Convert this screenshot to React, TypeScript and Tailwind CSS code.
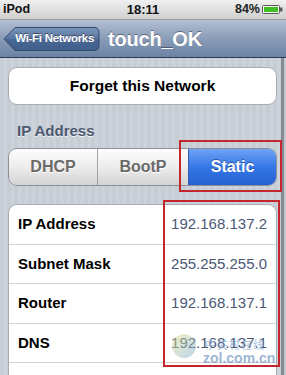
import React from "react";

const font = { fontFamily: '"Liberation Sans", Arial, "Noto Sans CJK SC", sans-serif' };

function Battery() {
  return (
    <svg width="21" height="9" viewBox="0 0 21 9">
      <rect x="0.5" y="0.5" width="17" height="8" rx="1" fill="#f4f4f4" stroke="#5a5a5a" />
      <rect x="2" y="2" width="14" height="5" fill="#3fbf24" />
      <rect x="18" y="2.5" width="2.5" height="4" fill="#5a5a5a" />
    </svg>
  );
}

function BackButton() {
  return (
    <div className="relative w-[97px] h-[26px] flex items-center justify-end pr-[6px]">
      <svg className="absolute inset-0" width="97" height="26" viewBox="0 0 97 26">
        <defs>
          <linearGradient id="bb" x1="0" y1="0" x2="0" y2="1">
            <stop offset="0" stopColor="#7d97bb" />
            <stop offset="0.5" stopColor="#56739e" />
            <stop offset="0.51" stopColor="#4a6893" />
            <stop offset="1" stopColor="#3f5e8c" />
          </linearGradient>
        </defs>
        <path
          d="M1 13 L12 1.5 H91 Q96 1.5 96 6.5 V19.5 Q96 24.5 91 24.5 H12 Z"
          fill="url(#bb)"
          stroke="#34496d"
          strokeWidth="1"
        />
      </svg>
      <span className="relative text-white font-bold text-[11.5px] tracking-[-0.3px] [text-shadow:0_-1px_0_rgba(0,0,0,0.45)]">
        Wi-Fi Networks
      </span>
    </div>
  );
}

function Row({ label, value, last }: { label: string; value: string; last?: boolean }) {
  return (
    <div
      className={
        "h-[39.5px] flex items-center justify-between pl-[9px] pr-[9px] " +
        (last ? "" : "border-b border-[#d2d2d2]")
      }
    >
      <span className="font-bold text-[15px] text-black">{label}</span>
      <span className="text-[15px] text-[#4a5874]">{value}</span>
    </div>
  );
}

export default function App() {
  return (
    <div className="relative w-[286px] h-[375px] overflow-hidden flex flex-col bg-[#c5ccd4]" style={font}>
      {/* Status bar */}
      <div className="h-[20px] shrink-0 flex items-center justify-between px-[3px] bg-gradient-to-b from-[#f0f0f0] to-[#cfcfcf] border-b border-[#9a9a9a]">
        <span className="font-bold text-[12.5px] text-[#111] w-[60px]">iPod</span>
        <span className="font-bold text-[13px] text-[#111]">18:11</span>
        <div className="w-[60px] flex items-center justify-end gap-[2px]">
          <span className="font-bold text-[12.5px] text-[#222]">84%</span>
          <Battery />
        </div>
      </div>

      {/* Nav bar */}
      <div className="h-[38px] shrink-0 flex items-center gap-[8px] pl-[3px] bg-gradient-to-b from-[#b3c0d2] via-[#8a9cb7] to-[#6b83a4] border-b border-[#2f3d52]">
        <BackButton />
        <span className="text-white font-bold text-[20px] tracking-[-0.2px] [text-shadow:0_-1px_0_rgba(0,0,0,0.4)]">
          touch_OK
        </span>
      </div>

      {/* Body */}
      <div className="flex-1 flex min-h-0">
        <div className="flex-1 flex flex-col pl-[8px] pr-[4px] pt-[9px] bg-[repeating-linear-gradient(90deg,#c6cdd5_0px,#c6cdd5_4px,#ccd3da_4px,#ccd3da_7px)]">
          <div className="h-[38px] shrink-0 rounded-[9px] bg-white border border-[#a9adb3] flex items-center justify-center">
            <span className="font-bold text-[15.5px] text-black">Forget this Network</span>
          </div>

          <div className="mt-[18px] pl-[9px] h-[16px] flex items-center">
            <span className="font-bold text-[15px] text-[#4d5870] [text-shadow:0_1px_0_rgba(255,255,255,0.8)]">
              IP Address
            </span>
          </div>

          <div className="mt-[9px] h-[38px] shrink-0 flex rounded-[9px] border border-[#8d9096] overflow-hidden">
            <div className="w-[89px] flex items-center justify-center bg-gradient-to-b from-[#fdfdfd] via-[#ededed] to-[#d3d3d3] border-r border-[#a3a3a3]">
              <span className="font-bold text-[16px] text-[#6a6a6a] [text-shadow:0_1px_0_#fff]">DHCP</span>
            </div>
            <div className="w-[91px] flex items-center justify-center bg-gradient-to-b from-[#fdfdfd] via-[#ededed] to-[#d3d3d3] border-r border-[#3a5fa8]">
              <span className="font-bold text-[16px] text-[#6a6a6a] [text-shadow:0_1px_0_#fff]">BootP</span>
            </div>
            <div className="flex-1 flex items-center justify-center bg-gradient-to-b from-[#6fa3f5] via-[#3577e6] to-[#2660d2]">
              <span className="font-bold text-[16px] text-white [text-shadow:0_-1px_0_rgba(0,0,0,0.35)]">Static</span>
            </div>
          </div>

          <div className="mt-[18px] shrink-0 rounded-[9px] bg-white border border-[#a9adb3]">
            <Row label="IP Address" value="192.168.137.2" />
            <Row label="Subnet Mask" value="255.255.255.0" />
            <Row label="Router" value="192.168.137.1" />
            <Row label="DNS" value="192.168.137.1" />
            <div className="h-[39.5px]" />
          </div>
        </div>
        <div className="w-[3px] bg-[#858a93]" />
        <div className="w-[2px] bg-[#c3c7ce]" />
      </div>

      {/* Red highlight boxes */}
      <div className="absolute left-[179px] top-[140px] w-[103px] h-[52px] border-2 border-[#c4262d]" />
      <div className="absolute left-[163px] top-[200px] w-[117px] h-[167px] border-2 border-[#c4262d]" />

      {/* Watermark */}
      <div className="absolute left-[172px] top-[334px] w-[24px] h-[24px] rounded-full bg-gradient-to-br from-[#e6e07a] to-[#7aa6d8] opacity-50" />
      <div className="absolute left-[205px] top-[337px] text-[11px] text-[#8fb3dc] opacity-80 tracking-[1px]">中关村在线</div>
      <div className="absolute left-[203px] top-[348px] text-[14px] font-bold text-[#7d9fc6] opacity-75">zol.com.cn</div>
    </div>
  );
}
